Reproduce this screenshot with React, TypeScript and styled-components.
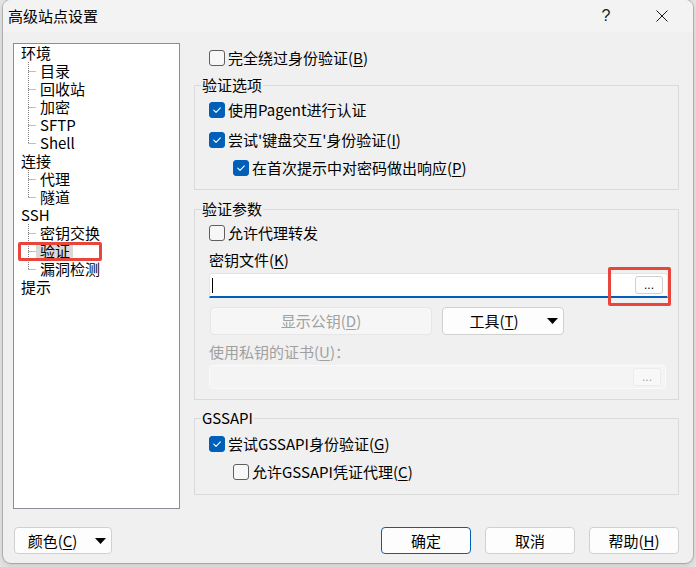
import React from "react";
import styled, { createGlobalStyle } from "styled-components";

const Global = createGlobalStyle`
  html, body { margin: 0; padding: 0; background: #e4e4e4; }
  body {
    font-family: "Noto Sans CJK SC", "Noto Sans", sans-serif;
    font-size: 15px;
    color: #000;
  }
  #root { width: 696px; height: 567px; overflow: hidden; }
`;

const Dialog = styled.div`
  position: relative;
  margin-left: 3px;
  width: 690px;
  height: 563px;
  background: #f0f0f0;
  border-radius: 8px;
  box-shadow: 0 0 0 1px rgba(0, 0, 0, 0.18), 0 2px 6px rgba(0, 0, 0, 0.15);
  overflow: hidden;
  display: flex;
  flex-direction: column;
`;

const TitleBar = styled.div`
  flex: none;
  height: 32px;
  display: flex;
  align-items: center;
  padding: 0 8px 0 5px;
  background: #f3f3f3;
`;

const Title = styled.div`
  flex: 1;
  font-size: 15px;
  line-height: 20px;
`;

const TitleButton = styled.div<{ $gap?: number }>`
  width: 46px;
  height: 32px;
  display: flex;
  align-items: center;
  justify-content: center;
  margin-right: ${(p) => p.$gap ?? 0}px;
  font-family: "Liberation Sans", sans-serif;
  font-size: 16px;
  color: #1a1a1a;
`;

const Body = styled.div`
  flex: 1;
  display: flex;
  flex-direction: column;
  padding: 11px 14px 0 10px;
`;

const Main = styled.div`
  display: flex;
  gap: 14px;
  height: 466px;
`;

const Tree = styled.ul`
  box-sizing: border-box;
  width: 167px;
  height: 466px;
  margin: 0;
  padding: 0;
  list-style: none;
  background: #fff;
  border: 1px solid #8a8f96;
`;

const TreeNode = styled.li`
  margin: 0;
  padding: 0;
`;

const RootLabel = styled.div`
  height: 18px;
  line-height: 18px;
  padding-left: 7px;
`;

const ChildList = styled.ul`
  margin: 0;
  padding: 0;
  list-style: none;
`;

const ChildRow = styled.li`
  display: flex;
  align-items: flex-start;
  height: 18px;
  line-height: 18px;
  padding-left: 14px;
`;

const ConnectorSvg = styled.svg`
  flex: none;
  display: block;
`;

const Connector = ({ last }: { last?: boolean }) => (
  <ConnectorSvg width="12" height="18" viewBox="0 0 12 18">
    <path
      d={last ? "M0.5 0 V9.5 M0.5 9.5 H8" : "M0.5 0 V18 M0.5 9.5 H8"}
      stroke="#7f7f7f"
      strokeWidth="1"
      strokeDasharray="1 1"
      fill="none"
    />
  </ConnectorSvg>
);

const ChildLabel = styled.span<{ $selected?: boolean }>`
  align-self: center;
  display: inline-block;
  line-height: 16px;
  margin-left: -4px;
  padding: 0 3px 0 4px;
  background: ${(p) => (p.$selected ? "#d9d9d9" : "transparent")};
`;

const RightPane = styled.div`
  width: 485px;
  display: flex;
  flex-direction: column;
`;

const CheckRow = styled.div<{ $indent?: boolean; $mt: number; $pl?: number }>`
  display: flex;
  align-items: center;
  gap: 3px;
  height: 20px;
  line-height: 20px;
  margin-top: ${(p) => p.$mt}px;
  padding-left: ${(p) => (p.$indent ? 24 : 0) + (p.$pl ?? 0)}px;
  white-space: nowrap;
`;

const Box = styled.span<{ $checked?: boolean }>`
  flex: none;
  box-sizing: border-box;
  width: 16px;
  height: 16px;
  border-radius: 3px;
  display: flex;
  align-items: center;
  justify-content: center;
  background: ${(p) => (p.$checked ? "#005fb8" : "#f7f7f7")};
  border: 1px solid ${(p) => (p.$checked ? "#005fb8" : "#5f5f5f")};
`;

const Mn = styled.span`
  text-decoration: underline;
  text-underline-offset: 2px;
`;

const Group = styled.fieldset<{ $mt: number; $pb: number }>`
  margin: ${(p) => p.$mt}px 0 0;
  padding: 0 0 ${(p) => p.$pb}px;
  border: 1px solid #dadada;
  min-width: 0;
`;

const Legend = styled.legend`
  margin-left: 6px;
  padding: 0 1px;
  font-size: 15px;
  line-height: 18px;
`;

const GroupBody = styled.div`
  display: flex;
  flex-direction: column;
  align-items: flex-start;
  padding-left: 14px;
`;

const FieldLabel = styled.div<{ $mt: number; $disabled?: boolean }>`
  height: 20px;
  line-height: 20px;
  margin-top: ${(p) => p.$mt}px;
  color: ${(p) => (p.$disabled ? "#a0a0a0" : "#000")};
`;

const Field = styled.div<{ $disabled?: boolean; $mt: number }>`
  box-sizing: border-box;
  display: flex;
  align-items: center;
  margin-top: ${(p) => p.$mt}px;
  width: ${(p) => (p.$disabled ? 457 : 459)}px;
  height: ${(p) => (p.$disabled ? 24 : 25)}px;
  padding: 0 4px 0 2px;
  background: ${(p) => (p.$disabled ? "#f4f4f4" : "#fff")};
  border: 1px solid ${(p) => (p.$disabled ? "#fafafa" : "#e4e4e4")};
  border-bottom: ${(p) => (p.$disabled ? "1px solid #fafafa" : "2px solid #005fb8")};
  border-radius: ${(p) => (p.$disabled ? "3px" : "3px 3px 0 0")};
`;

const Caret = styled.span`
  width: 1px;
  height: 15px;
  background: #000;
`;

const Browse = styled.div<{ $disabled?: boolean }>`
  margin-left: auto;
  box-sizing: border-box;
  width: 28px;
  height: 18px;
  display: flex;
  align-items: center;
  justify-content: center;
  border: 1px solid ${(p) => (p.$disabled ? "#ececec" : "#d0d0d0")};
  border-radius: 3px;
  background: ${(p) => (p.$disabled ? "#f8f8f8" : "#fdfdfd")};
  font-family: "Liberation Sans", sans-serif;
  font-size: 12px;
  line-height: 20px;
  color: ${(p) => (p.$disabled ? "#a0a0a0" : "#000")};
`;

const ButtonRow = styled.div`
  display: flex;
  gap: 10px;
  margin: 9px 0 0 1px;
`;

const Btn = styled.div<{ $w: number; $h: number; $primary?: boolean; $disabled?: boolean }>`
  box-sizing: border-box;
  width: ${(p) => p.$w}px;
  height: ${(p) => p.$h}px;
  display: flex;
  align-items: center;
  justify-content: center;
  border-radius: 4px;
  border: 1px solid
    ${(p) => (p.$primary ? "#005fb8" : p.$disabled ? "#e6e6e6" : "#d0d0d0")};
  background: ${(p) => (p.$disabled ? "#f6f6f6" : "#fdfdfd")};
  color: ${(p) => (p.$disabled ? "#a0a0a0" : "#000")};
  line-height: 20px;
  white-space: nowrap;
`;

const DropBtn = styled(Btn)<{ $gap: number }>`
  justify-content: flex-start;
  padding-right: 5px;
  & > span:first-child {
    flex: 1;
    text-align: center;
  }
  & > svg {
    flex: none;
    margin-left: ${(p) => p.$gap}px;
  }
`;

const BottomBar = styled.div`
  display: flex;
  justify-content: space-between;
  align-items: center;
  margin-top: 18px;
  padding-left: 1px;
`;

const ActionGroup = styled.div`
  display: flex;
  gap: 14px;
`;

const Annotation = styled.div<{ $l: number; $t: number; $w: number; $h: number }>`
  position: absolute;
  box-sizing: border-box;
  left: ${(p) => p.$l}px;
  top: ${(p) => p.$t}px;
  width: ${(p) => p.$w}px;
  height: ${(p) => p.$h}px;
  border: 3px solid #e8453c;
  border-radius: 2px;
  pointer-events: none;
`;

const Check = () => (
  <svg width="16" height="16" viewBox="0 0 16 16">
    <path
      d="M4.3 8.2 L6.9 10.7 L11.8 5.6"
      fill="none"
      stroke="#fff"
      strokeWidth="1.3"
      strokeLinecap="round"
      strokeLinejoin="round"
    />
  </svg>
);

const Arrow = () => (
  <svg width="11" height="6" viewBox="0 0 11 6">
    <path d="M0 0 H11 L5.5 6 Z" fill="#000" />
  </svg>
);

const CloseIcon = () => (
  <svg width="12" height="12" viewBox="0 0 12 12">
    <path d="M0.5 0.5 L11.5 11.5 M11.5 0.5 L0.5 11.5" stroke="#1a1a1a" strokeWidth="1" />
  </svg>
);

type CB = { checked?: boolean; children: React.ReactNode; mt: number; indent?: boolean; pl?: number };
const Checkbox = ({ checked, children, mt, indent, pl }: CB) => (
  <CheckRow $mt={mt} $indent={indent} $pl={pl}>
    <Box $checked={checked}>{checked && <Check />}</Box>
    <span>{children}</span>
  </CheckRow>
);

const tree: { label: string; children: { label: string; selected?: boolean }[] }[] = [
  { label: "环境", children: [{ label: "目录" }, { label: "回收站" }, { label: "加密" }, { label: "SFTP" }, { label: "Shell" }] },
  { label: "连接", children: [{ label: "代理" }, { label: "隧道" }] },
  { label: "SSH", children: [{ label: "密钥交换" }, { label: "验证", selected: true }, { label: "漏洞检测" }] },
  { label: "提示", children: [] },
];

export default function App() {
  return (
    <>
      <Global />
      <Dialog>
        <TitleBar>
          <Title>高级站点设置</Title>
          <TitleButton $gap={10}>?</TitleButton>
          <TitleButton>
            <CloseIcon />
          </TitleButton>
        </TitleBar>
        <Body>
          <Main>
            <Tree>
              {tree.map((n) => (
                <TreeNode key={n.label}>
                  <RootLabel>{n.label}</RootLabel>
                  {n.children.length > 0 && (
                    <ChildList>
                      {n.children.map((c, i) => (
                        <ChildRow key={c.label}>
                          <Connector last={i === n.children.length - 1} />
                          <ChildLabel $selected={c.selected}>{c.label}</ChildLabel>
                        </ChildRow>
                      ))}
                    </ChildList>
                  )}
                </TreeNode>
              ))}
            </Tree>
            <RightPane>
              <Checkbox mt={5} pl={15}>
                完全绕过身份验证(<Mn>B</Mn>)
              </Checkbox>
              <Group $mt={8} $pb={11}>
                <Legend>验证选项</Legend>
                <GroupBody>
                  <Checkbox checked mt={6}>
                    使用Pagent进行认证
                  </Checkbox>
                  <Checkbox checked mt={10}>
                    尝试'键盘交互'身份验证(<Mn>I</Mn>)
                  </Checkbox>
                  <Checkbox checked mt={8} indent>
                    在首次提示中对密码做出响应(<Mn>P</Mn>)
                  </Checkbox>
                </GroupBody>
              </Group>
              <Group $mt={10} $pb={10}>
                <Legend>验证参数</Legend>
                <GroupBody>
                  <Checkbox mt={5}>允许代理转发</Checkbox>
                  <FieldLabel $mt={7}>
                    密钥文件(<Mn>K</Mn>)
                  </FieldLabel>
                  <Field $mt={3}>
                    <Caret />
                    <Browse>...</Browse>
                  </Field>
                  <ButtonRow>
                    <Btn $w={222} $h={28} $disabled>
                      <span>
                        显示公钥(<Mn>D</Mn>)
                      </span>
                    </Btn>
                    <DropBtn $w={122} $h={28} $gap={2}>
                      <span>
                        工具(<Mn>T</Mn>)
                      </span>
                      <Arrow />
                    </DropBtn>
                  </ButtonRow>
                  <FieldLabel $mt={7} $disabled>
                    使用私钥的证书(<Mn>U</Mn>)：
                  </FieldLabel>
                  <Field $mt={3} $disabled>
                    <Browse $disabled>...</Browse>
                  </Field>
                </GroupBody>
              </Group>
              <Group $mt={9} $pb={12}>
                <Legend>GSSAPI</Legend>
                <GroupBody>
                  <Checkbox checked mt={7}>
                    尝试GSSAPI身份验证(<Mn>G</Mn>)
                  </Checkbox>
                  <Checkbox mt={8} indent>
                    允许GSSAPI凭证代理(<Mn>C</Mn>)
                  </Checkbox>
                </GroupBody>
              </Group>
            </RightPane>
          </Main>
          <BottomBar>
            <DropBtn $w={98} $h={27} $gap={5}>
              <span>
                颜色(<Mn>C</Mn>)
              </span>
              <Arrow />
            </DropBtn>
            <ActionGroup>
              <Btn $w={90} $h={27} $primary>
                确定
              </Btn>
              <Btn $w={90} $h={27}>
                取消
              </Btn>
              <Btn $w={90} $h={27}>
                <span>
                  帮助(<Mn>H</Mn>)
                </span>
              </Btn>
            </ActionGroup>
          </BottomBar>
        </Body>
        <Annotation $l={15} $t={242} $w={84} $h={19} />
        <Annotation $l={605} $t={267} $w={63} $h={39} />
      </Dialog>
    </>
  );
}
